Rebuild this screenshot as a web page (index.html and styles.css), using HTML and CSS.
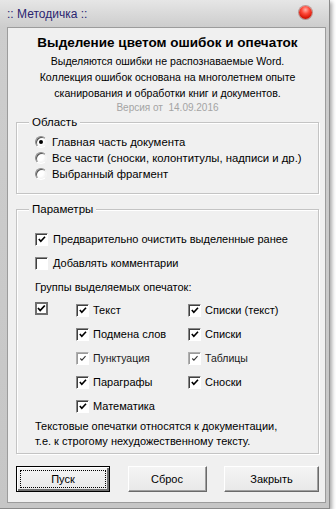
FILE: index.html
```html
<!DOCTYPE html>
<html lang="ru">

<head>
    <title>Методичка</title>
    <meta charset="UTF-8" />
    <meta name="viewport" content="width=device-width, initial-scale=1.0" />
    <link rel="stylesheet" href="styles.css">
</head>

<body>
    <div class="window">
        <div class="titlebar">
            <span class="caption">:: Методичка ::</span>
            <span class="close"></span>
        </div>
        <div class="client">
            <header class="intro">
                <h1>Выделение цветом ошибок и опечаток</h1>
                <p>Выделяются ошибки не распознаваемые Word.<br>Коллекция ошибок основана на многолетнем опыте<br>сканирования и обработки книг и документов.</p>
                <p class="version">Версия от &nbsp;14.09.2016</p>
            </header>

            <!-- область обработки -->
            <div class="group area">
                <div class="legend">Область</div>
                <label class="option first"><span class="radio on"></span>Главная часть документа</label>
                <label class="option"><span class="radio"></span>Все части (сноски, колонтитулы, надписи и др.)</label>
                <label class="option"><span class="radio"></span>Выбранный фрагмент</label>
            </div>

            <!-- параметры -->
            <div class="group params">
                <div class="legend">Параметры</div>
                <label class="option spaced first"><span class="check on"><svg viewBox="0 0 11 11"><polyline points="2,5 4.2,7.5 8.8,2.5" /></svg></span>Предварительно очистить выделенные ранее</label>
                <label class="option spaced"><span class="check"></span>Добавлять комментарии</label>
                <div class="subhead">Группы выделяемых опечаток:</div>
                <div class="kinds">
                    <span class="check flat on master"><svg viewBox="0 0 9 9"><polyline points="1,4 3.2,6.5 7.8,1.5" /></svg></span>
                    <label class="option"><span class="check on"><svg viewBox="0 0 11 11"><polyline points="2,5 4.2,7.5 8.8,2.5" /></svg></span>Текст</label>
                    <label class="option"><span class="check on"><svg viewBox="0 0 11 11"><polyline points="2,5 4.2,7.5 8.8,2.5" /></svg></span>Списки (текст)</label>
                    <label class="option col-1"><span class="check on"><svg viewBox="0 0 11 11"><polyline points="2,5 4.2,7.5 8.8,2.5" /></svg></span>Подмена слов</label>
                    <label class="option"><span class="check on"><svg viewBox="0 0 11 11"><polyline points="2,5 4.2,7.5 8.8,2.5" /></svg></span>Списки</label>
                    <label class="option col-1 dim"><span class="check on"><svg viewBox="0 0 11 11"><polyline points="2.5,5.5 4.3,7.3 8.3,3" /></svg></span>Пунктуация</label>
                    <label class="option dim"><span class="check on"><svg viewBox="0 0 11 11"><polyline points="2.5,5.5 4.3,7.3 8.3,3" /></svg></span>Таблицы</label>
                    <label class="option col-1"><span class="check on"><svg viewBox="0 0 11 11"><polyline points="2,5 4.2,7.5 8.8,2.5" /></svg></span>Параграфы</label>
                    <label class="option"><span class="check on"><svg viewBox="0 0 11 11"><polyline points="2,5 4.2,7.5 8.8,2.5" /></svg></span>Сноски</label>
                    <label class="option col-1"><span class="check on"><svg viewBox="0 0 11 11"><polyline points="2,5 4.2,7.5 8.8,2.5" /></svg></span>Математика</label>
                </div>
                <p class="note">Текстовые опечатки относятся к документации,<br>т.е. к строгому нехудожественному тексту.</p>
            </div>

            <div class="buttons">
                <button class="btn default" type="button"><span>Пуск</span></button>
                <button class="btn narrow" type="button"><span>Сброс</span></button>
                <button class="btn" type="button"><span>Закрыть</span></button>
            </div>
        </div>
    </div>
</body>

</html>
```

FILE: styles.css
```css
body {
    margin: 0;
    background-color: #fff;
    font-family: "Liberation Sans", Arial, sans-serif;
    font-size: 11px;
    color: #000;
}

/* window frame */
.window {
    width: 329px;
    height: 508px;
    border-right: 1px solid #8a8a8a;
    border-bottom: 1px solid #8a8a8a;
    background: linear-gradient(#e6e6e6, #cdcdcd 27px, #c6c6c6);
    box-shadow: 2px 2px 4px rgba(0, 0, 0, 0.35);
    display: flex;
    flex-direction: column;
}

.titlebar {
    height: 27px;
    display: flex;
    align-items: center;
    justify-content: space-between;
    padding: 0 17px 0 7px;
}

.caption {
    font-size: 12px;
    color: #2a2470;
    margin-top: 1px;
}

.close {
    width: 13px;
    height: 13px;
    border-radius: 50%;
    margin-top: -2px;
    background: radial-gradient(circle at 50% 30%, #ffb0a8 0, #ff4a3a 35%, #d81808 70%, #a00800 100%);
    box-shadow: 0 0 0 1px rgba(120, 20, 10, 0.35);
}

.client {
    margin: 0 3px 0 7px;
    height: 474px;
    border: 1px solid #9c9c9c;
    background-color: #f0f0f0;
    padding: 0 6px 0 8px;
}

/* header */
.intro {
    text-align: center;
}

.intro h1 {
    margin: 7px 0 0 0;
    font-size: 13.5px;
    line-height: 16px;
    font-weight: bold;
}

.intro p {
    margin: 2px 0 0 0;
    line-height: 16px;
    font-size: 10.6px;
}

.intro .version {
    margin: 0;
    line-height: 14px;
    font-size: 10px;
    color: #a4a4a4;
}

/* group boxes */
.group {
    padding: 0 0 0 18px;
    border: 1px solid #c4c4c4;
    box-shadow: inset 1px 1px #fff, 1px 1px #fff;
}

.group .legend {
    width: fit-content;
    margin: -8px 0 0 -6px;
    padding: 0 3px;
    line-height: 14px;
    font-size: 11.5px;
    background-color: #f0f0f0;
}

.area {
    margin-top: 7px;
    padding-bottom: 11px;
}

.area .first {
    margin-top: 5px;
}

.params {
    margin-top: 15px;
    padding-bottom: 4px;
}

.option {
    display: flex;
    align-items: center;
    height: 16px;
    gap: 5px;
    white-space: nowrap;
    font-size: 11px;
}

.area .option {
    font-size: 11.3px;
}

.spaced {
    margin-top: 8px;
}

.params .first {
    margin-top: 15px;
}

.subhead {
    margin-top: 8px;
    line-height: 16px;
}

/* radio buttons */
.radio {
    width: 12px;
    height: 12px;
    box-sizing: border-box;
    border-radius: 50%;
    border: 1px solid;
    border-color: #8c8c8c #f4f4f4 #ffffff #8c8c8c;
    background: radial-gradient(circle at 40% 40%, #fff 40%, #e6e6e6 100%);
    box-shadow: inset 1px 1px #555;
    display: flex;
    align-items: center;
    justify-content: center;
}

.radio.on::after {
    content: "";
    width: 4px;
    height: 4px;
    border-radius: 50%;
    background-color: #000;
}

/* checkboxes */
.check {
    width: 13px;
    height: 13px;
    box-sizing: border-box;
    flex: none;
    border: 1px solid;
    border-color: #888 #fff #fff #888;
    box-shadow: inset 1px 1px #404040;
    background-color: #fff;
    display: flex;
    align-items: center;
    justify-content: center;
}

.check svg {
    width: 11px;
    height: 11px;
    margin: 1px 0 0 1px;
}

.check polyline {
    fill: none;
    stroke: #000;
    stroke-width: 1.8;
}

.check.flat {
    border: 2px solid #6e6e6e;
    box-shadow: none;
}

.check.flat svg {
    width: 9px;
    height: 9px;
    margin: 0;
}

.kinds .dim {
    font-size: 10.5px;
    color: #1a1a1a;
}

.dim .check {
    border-color: #b0b0b0 #fff #fff #b0b0b0;
    box-shadow: inset 1px 1px #9a9a9a;
}

.dim .check polyline {
    stroke: #333;
    stroke-width: 1.2;
}

.kinds {
    display: grid;
    grid-template-columns: 41px 112px auto;
    row-gap: 8px;
    margin-top: 7px;
}

.kinds .option {
    gap: 4px;
}

.col-1 {
    grid-column: 2;
}

.note {
    margin: 5px 0 0 0;
    line-height: 15px;
}

/* buttons */
.buttons {
    display: flex;
    justify-content: space-between;
    margin-top: 12px;
}

.btn {
    width: 95px;
    height: 26px;
    padding: 0;
    font: inherit;
    font-size: 11px;
    color: #000;
    background: linear-gradient(#f4f4f4, #e8e8e8);
    border: 1px solid;
    border-color: #fff #6a6a6a #6a6a6a #fff;
    box-shadow: inset -1px -1px #a0a0a0;
}

.btn.narrow {
    width: 79px;
}

.btn.default {
    width: 94px;
    border: 1px solid #000;
    box-shadow: inset 1px 1px #fff, inset -2px -2px #707070;
    display: flex;
    align-items: stretch;
    padding: 3px;
}

.btn.default span {
    flex: 1;
    display: flex;
    align-items: center;
    justify-content: center;
    border: 1px dotted #000;
}
```
